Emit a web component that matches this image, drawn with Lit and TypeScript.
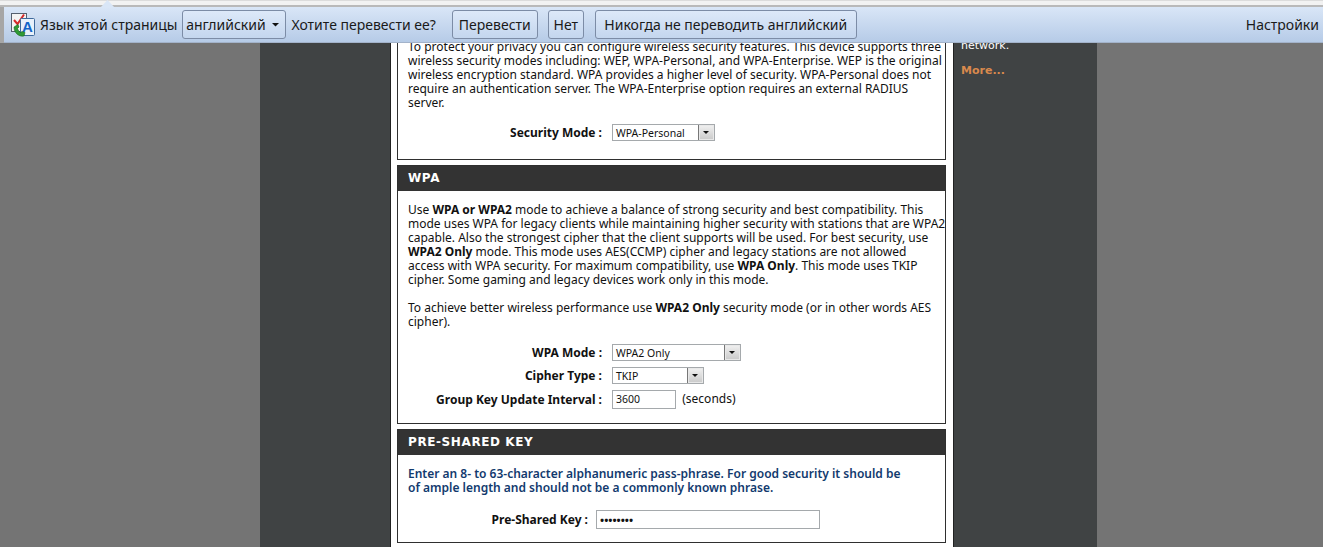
import { LitElement, html, css } from "lit";
import { customElement } from "lit/decorators.js";

const icon = html`<svg class="tr-icon" width="26" height="26" viewBox="0 0 26 26">
  <rect x="1.5" y="1.5" width="15" height="18" fill="#f4f4f4" stroke="#55606e"/>
  <path d="M4 8 L7.5 12 L14 2.5" fill="none" stroke="#d42a2a" stroke-width="2"/>
  <rect x="10.5" y="6.5" width="14" height="17" rx="1" fill="#e8f1fb" stroke="#3f6a9c"/>
  <text x="17.5" y="20" text-anchor="middle" class="tr-a">A</text>
  <path d="M4 15 C4 21 9 25 14 24 L15 20.5 L12 19.5 L10.5 20.5 C9 19.5 8 18 7.5 16.5 L9 15 L8 12.5 Z" fill="#2f9a35" stroke="#17641d" stroke-width=".6"/>
</svg>`;

const arrow = html`<svg class="sel-arrow" width="15" height="15" viewBox="0 0 15 15"><path d="M4 6h7l-3.5 3.5z" fill="#111"/></svg>`;

@customElement("app-root")
export class AppRoot extends LitElement {
  static styles = css`
    :host { display: block; width: 1323px; height: 547px; overflow: hidden; position: relative; background: #747474; font-family: "Noto Sans", sans-serif; }
    .shell { margin-left: 260px; width: 837px; height: 547px; background: #404344; display: flex; }
    .left { width: 130px; }
    .center { width: 564px; height: 547px; background: #fff; border-left: 1px solid #222; border-right: 1px solid #222; box-sizing: border-box; padding: 40px 7px 0 6px; display: flex; flex-direction: column; gap: 5px; }
    .right { width: 143px; padding: 39px 0 0 7px; box-sizing: border-box; color: #fff; font: 11px/14px "DejaVu Sans", sans-serif; }
    .more { margin-top: 11px; font-weight: bold; color: #d9894d; }
    .panel { border: 1px solid #2f2f2f; background: #fff; color: #111; font: 12px/14px "Noto Sans", sans-serif; flex: none; }
    .p1 { border-top: 0; height: 120px; box-sizing: border-box; padding: 0 10px; }
    .p2 { height: 259px; box-sizing: border-box; }
    .p3 { height: 114px; box-sizing: border-box; }
    h2 { margin: 0; height: 25px; background: #333; color: #fff; font: bold 12px/25px "DejaVu Sans", sans-serif; letter-spacing: .6px; padding: 0 10px; }
    p { margin: 0; white-space: nowrap; }
    .body { padding: 12px 10px 0; }
    .gap { margin-top: 14px; }
    .navy { color: #123a6e; font-weight: 600; font-size: 12px; }
    .row { display: grid; grid-template-columns: 194px auto; column-gap: 10px; align-items: center; }
    .row label { text-align: right; font-weight: 700; font-size: 12px; }
    .sel { display: inline-flex; align-items: center; box-sizing: border-box; height: 17px; border: 1px solid #a5a9ac; background: #fff; font: 10.5px "Noto Sans", sans-serif; padding-left: 3px; justify-content: space-between; }
    .sel i { width: 15px; height: 15px; background: linear-gradient(#f1f1f1, #c9c9c9); border-left: 1px solid #777; box-shadow: inset 0 0 0 1px #e8e8e8; position: relative; display: block; }
    .sel i::after { content: ""; position: absolute; left: 4px; top: 6px; border: 3.5px solid transparent; border-top-color: #111; border-bottom: 0; }
    .input { display: inline-block; box-sizing: border-box; height: 19px; border: 1px solid #a5a9ac; background: #fff; font: 10.5px/17px "Noto Sans", sans-serif; padding-left: 3px; }
    .infobar { position: absolute; left: 0; top: 0; width: 1323px; height: 43px; }
    .chrome { height: 7px; background: linear-gradient(#dcdcdc 0 1px, #f2f2f2 1px 5px, #b9b9b9 5px 7px); }
    .bar { margin-left: 4px; height: 36px; box-sizing: border-box; background: linear-gradient(#d9e6f7, #b6cbe7); border-bottom: 1px solid #a3b3ca; display: flex; align-items: center; padding: 0 4px 0 6px; font: 14px "Noto Sans", sans-serif; color: #1a1a1a; white-space: nowrap; }
    .side { position: absolute; left: 0; top: 7px; width: 4px; height: 36px; background: #a6a6a6; }
    .tip { position: absolute; left: 100px; top: 0; width: 15px; height: 8px; background: #d9e6f7; clip-path: polygon(50% 0, 100% 100%, 0 100%); }
    .tr-icon { flex: none; margin-right: 4px; }
    .tr-a { font: bold 15px "Liberation Sans", sans-serif; fill: #1464c8; }
    .btn { box-sizing: border-box; height: 29px; border: 1px solid #7c8ca6; border-radius: 3px; background: linear-gradient(#dde9f9, #c4d6ee); display: inline-flex; align-items: center; justify-content: center; }
    .lang { width: 104px; margin: 0 5px; }
    .sel-arrow { margin-left: 2px; }
    .b1 { width: 86px; margin-left: 16px; }
    .b2 { width: 36px; margin-left: 10px; }
    .b3 { width: 262px; margin-left: 11px; }
    .spacer { flex: 1; }
  `;

  render() {
    return html`
      <div class="shell">
        <div class="left"></div>
        <div class="center">
          <section class="panel p1">
            <p>To protect your privacy you can configure wireless security features. This device supports three</p>
            <p>wireless security modes including: WEP, WPA-Personal, and WPA-Enterprise. WEP is the original</p>
            <p>wireless encryption standard. WPA provides a higher level of security. WPA-Personal does not</p>
            <p>require an authentication server. The WPA-Enterprise option requires an external RADIUS</p>
            <p>server.</p>
            <div class="row gap"><label>Security Mode :</label><span class="sel" style="width:103px">WPA-Personal<i></i></span></div>
          </section>
          <section class="panel p2">
            <h2>WPA</h2>
            <div class="body">
              <p>Use <b>WPA or WPA2</b> mode to achieve a balance of strong security and best compatibility. This</p>
              <p>mode uses WPA for legacy clients while maintaining higher security with stations that are WPA2</p>
              <p>capable. Also the strongest cipher that the client supports will be used. For best security, use</p>
              <p><b>WPA2 Only</b> mode. This mode uses AES(CCMP) cipher and legacy stations are not allowed</p>
              <p>access with WPA security. For maximum compatibility, use <b>WPA Only</b>. This mode uses TKIP</p>
              <p>cipher. Some gaming and legacy devices work only in this mode.</p>
              <p class="gap">To achieve better wireless performance use <b>WPA2 Only</b> security mode (or in other words AES</p>
              <p>cipher).</p>
              <div class="row" style="margin-top:15px;row-gap:6px">
                <label>WPA Mode :</label><span class="sel" style="width:129px">WPA2 Only<i></i></span>
                <label>Cipher Type :</label><span class="sel" style="width:92px">TKIP<i></i></span>
                <label>Group Key Update Interval :</label><span><span class="input" style="width:64px">3600</span>&nbsp; (seconds)</span>
              </div>
            </div>
          </section>
          <section class="panel p3">
            <h2>PRE-SHARED KEY</h2>
            <div class="body">
              <p class="navy">Enter an 8- to 63-character alphanumeric pass-phrase. For good security it should be</p>
              <p class="navy">of ample length and should not be a commonly known phrase.</p>
              <div class="row" style="margin-top:15px;grid-template-columns:180px auto;column-gap:8px"><label>Pre-Shared Key :</label><span class="input" style="width:224px;font-size:11px"><b>••••••••</b></span></div>
            </div>
          </section>
        </div>
        <div class="right">network.<div class="more">More...</div></div>
      </div>
      <div class="infobar">
        <div class="chrome"></div>
        <div class="side"></div>
        <div class="tip"></div>
        <div class="bar">
          ${icon}<span>Язык этой страницы</span>
          <span class="btn lang">английский${arrow}</span>
          <span>Хотите перевести ее?</span>
          <span class="btn b1">Перевести</span>
          <span class="btn b2">Нет</span>
          <span class="btn b3">Никогда не переводить английский</span>
          <span class="spacer"></span>
          <span>Настройки</span>
        </div>
      </div>
    `;
  }
}
